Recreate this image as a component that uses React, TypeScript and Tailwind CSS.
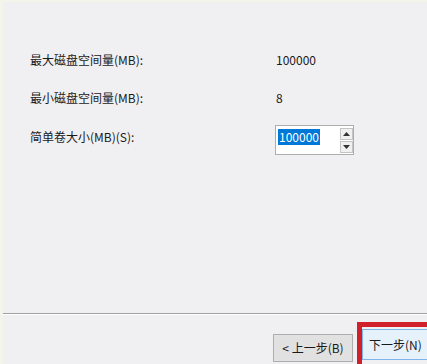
const font = { fontFamily: '"Noto Sans CJK SC", "Liberation Sans", sans-serif' };

function Row({ label, children }: { label: string; children: React.ReactNode }) {
  return (
    <div className="flex h-[18px] items-center">
      <div className="w-[273px] shrink-0 pl-[27px] text-[12px] leading-[18px] text-[#1a1a1a]">{label}</div>
      <div className="text-[12px] leading-[18px] text-[#1a1a1a]">{children}</div>
    </div>
  );
}

function SpinBox() {
  return (
    <div className="flex h-[30px] w-[79px] shrink-0 items-start border border-[#adadad] bg-white pl-[2px] pt-[2px]">
      <div className="mt-[1px] flex h-[16px] w-[62px] items-center">
        <span className="bg-[#0078d7] px-[1px] text-[12px] leading-[16px] text-white">100000</span>
      </div>
      <div className="flex flex-col gap-[1px]">
        <button className="flex h-[12px] w-[13px] items-center justify-center border border-[#c4c4c4] bg-[#f0f0f0]">
          <svg width="7" height="4" viewBox="0 0 7 4">
            <path d="M0 4 L3.5 0 L7 4 Z" fill="#333" />
          </svg>
        </button>
        <button className="flex h-[12px] w-[13px] items-center justify-center border border-[#c4c4c4] bg-[#f0f0f0]">
          <svg width="7" height="4" viewBox="0 0 7 4">
            <path d="M0 0 L3.5 4 L7 0 Z" fill="#333" />
          </svg>
        </button>
      </div>
    </div>
  );
}

export default function App() {
  return (
    <div
      className="flex h-[364px] w-[427px] flex-col overflow-hidden border-l-[3px] border-t-[2px] border-[#f4f5ea] bg-[#f0eff2]"
      style={font}
    >
      <div className="mt-[49px]">
        <Row label="最大磁盘空间量(MB):">100000</Row>
      </div>
      <div className="mt-[20px]">
        <Row label="最小磁盘空间量(MB):">8</Row>
      </div>
      <div className="mt-[18px] flex items-start">
        <div className="mt-[3px] w-[272px] shrink-0 pl-[27px] text-[12px] leading-[18px] text-[#1a1a1a]">简单卷大小(MB)(S):</div>
        <SpinBox />
      </div>

      <div className="flex-1" />

      <div className="h-[1px] shrink-0 bg-[#a0a0a0]" />
      <div className="h-[1px] shrink-0 bg-white" />

      <div className="flex h-[49px] shrink-0 items-start">
        <div className="w-[270px] shrink-0" />
        <button className="mt-[19px] flex h-[28px] w-[80px] shrink-0 items-center justify-center border border-[#adadad] bg-[#e1e1e1] text-[12px] text-[#1a1a1a]">
          &lt; 上一步(B)
        </button>
        <div className="ml-[4px] mt-[7px] h-[60px] w-[120px] shrink-0 border-[5px] border-r-0 border-[#d0202a] pt-[2px]">
          <button className="flex h-[31px] w-[80px] items-center justify-start border border-[#7eb4ea] bg-[#e5f1fb] pl-[6px] text-[12px] text-[#1a1a1a]">
            下一步(N)
          </button>
        </div>
      </div>
    </div>
  );
}
